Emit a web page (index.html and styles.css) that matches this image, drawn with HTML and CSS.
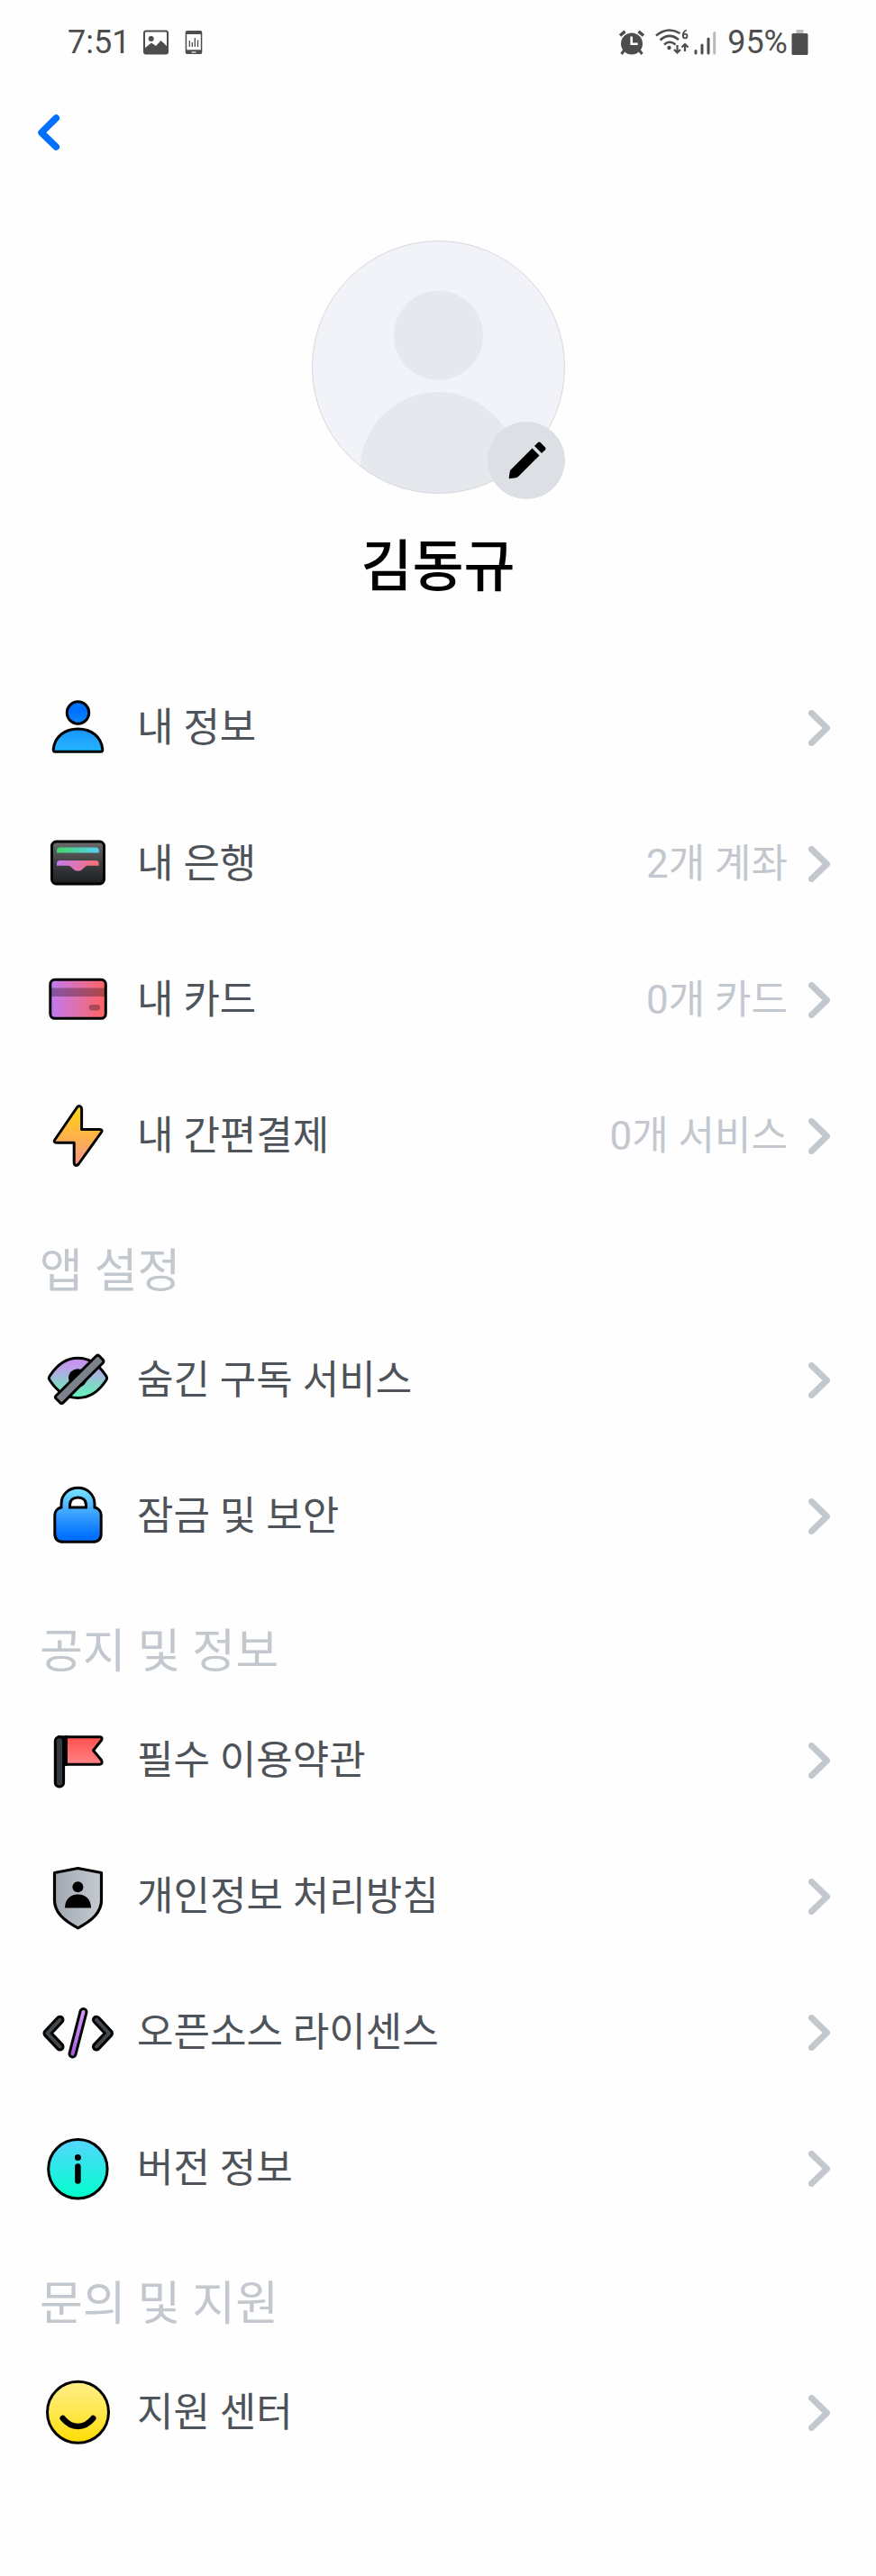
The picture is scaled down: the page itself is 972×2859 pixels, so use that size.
FILE: index.html
```html
<!DOCTYPE html>
<html lang="ko">
<head>
<meta charset="utf-8">
<meta name="viewport" content="width=device-width, initial-scale=1">
<title>내 프로필</title>
<link rel="stylesheet" href="styles.css">
</head>
<body>
<svg class="defs" aria-hidden="true">
  <symbol id="chevron" viewBox="0 0 24 40"><path d="M3.500 3.500 20.500 20 3.500 36.500" fill="none" stroke="currentColor" stroke-width="7" stroke-linecap="round" stroke-linejoin="round"/></symbol>
</svg>

<div class="status">
  <div class="status-group status-left">
    <span>7:51</span>
    <svg class="status-picture" width="28" height="28" viewBox="0 0 28 28" aria-hidden="true">
      <rect x="1" y="1.500" width="26" height="25" rx="2" fill="none" stroke="#4d4d4d" stroke-width="2"/>
      <circle cx="8.700" cy="10" r="3" fill="#4d4d4d"/>
      <path d="M1.500 20.500 9 14.500 14 18 19.500 12 26.500 18.500V26.500H1.500Z" fill="#4d4d4d"/>
    </svg>
    <svg width="20" height="28" viewBox="0 0 20 28" aria-hidden="true">
      <rect x=".7" y="1" width="18.600" height="26" rx="2" fill="#4d4d4d"/>
      <path d="M2.200 5h15.600v17.300H2.200z" fill="#fff"/>
      <path d="M7.500 25h5" stroke="#fff" stroke-width="1.200"/>
      <path d="M5.300 12v7M8.300 14v5M11.300 9v10M14.500 11.500v7.500" stroke="#4d4d4d" stroke-width="1.300" fill="none"/>
    </svg>
  </div>
  <div class="status-group">
    <svg class="status-alarm" width="30" height="28" viewBox="0 0 30 28" aria-hidden="true">
      <circle cx="15" cy="15.500" r="12" fill="#4d4d4d"/>
      <path d="M2 6.500 7.500 1.800M28 6.500 22.500 1.800" stroke="#4d4d4d" stroke-width="3.500"/>
      <path d="M6.500 23 3.500 27M23.500 23l3 4" stroke="#4d4d4d" stroke-width="3"/>
      <path d="M14.700 7.500v8.300h7" fill="none" stroke="#fff" stroke-width="2.600"/>
    </svg>
    <svg class="status-wifi" width="38" height="30" viewBox="0 0 38 30" aria-hidden="true">
      <g fill="none" stroke="#4d4d4d" stroke-width="2.600">
        <path d="M1 7.500Q14-3 27.500 5"/>
        <path d="M5.500 12.500Q15.500 3.500 26 12"/>
        <path d="M10 17.500Q16 12 22.500 17.500"/>
        <path d="M24.500 18v8M21 23l3.500 3.500L28 23M33 25v-8M29.500 20.500 33 17l3.500 3.500" stroke-width="2.200"/>
        <circle cx="33.200" cy="8" r="2.300" stroke-width="1.800"/>
        <path d="M34.800 1.500Q30.500 3 30.800 8" stroke-width="1.800"/>
      </g>
      <circle cx="15.500" cy="21" r="2.200" fill="#4d4d4d"/>
    </svg>
    <svg class="status-signal" width="25" height="28" viewBox="0 0 25 28" aria-hidden="true">
      <g stroke="#4d4d4d" stroke-width="3" stroke-linecap="round">
        <path d="M2 23.500v2.500M9 17v9M16 10v16"/>
        <path d="M22.700 3.500V26" stroke="#b9b9b9"/>
      </g>
    </svg>
    <span>95%</span>
    <svg class="status-battery" width="19" height="28" viewBox="0 0 19 28" aria-hidden="true">
      <path d="M5.500 0h8v5h-8z" fill="#bdbdbd"/>
      <rect x=".5" y="4" width="18" height="24" rx="1.500" fill="#4d4d4d"/>
    </svg>
  </div>
</div>

<header class="nav">
  <button class="back" type="button" aria-label="뒤로">
    <svg width="24" height="40" viewBox="0 0 24 40" aria-hidden="true"><path d="M20.300 4 4 20.200 20.300 36" fill="none" stroke="#0070ff" stroke-width="7.500" stroke-linecap="round" stroke-linejoin="round"/></svg>
  </button>
</header>

<main>
  <section class="profile">
    <div class="avatar">
      <svg width="281" height="281" viewBox="0 0 281 281" aria-hidden="true">
        <defs><clipPath id="disc"><circle cx="140.500" cy="140.500" r="140"/></clipPath></defs>
        <g clip-path="url(#disc)">
          <path d="M0 0h281v281H0z" fill="#f1f3f8"/>
          <circle cx="140.500" cy="105.300" r="49.500" fill="#e5e9ee"/>
          <circle cx="140.500" cy="255" r="87" fill="#e5e9ee"/>
        </g>
        <circle cx="140.500" cy="140.500" r="140" fill="none" stroke="#d6d8db"/>
      </svg>
      <button class="edit" type="button" aria-label="프로필 수정">
        <svg width="86" height="86" viewBox="0 0 86 86" aria-hidden="true">
          <path d="M49.500 29.500 57.500 37.500 34 61Q33 62 31.500 62.200L24.500 63.200Q23.500 63 23.700 62L24.700 55.500Q24.900 54.200 25.800 53.300Z"/>
          <path d="M52 27 56 23Q57.300 21.900 58.600 23L64 28.400Q65.100 29.800 64 31.200L60 35Z"/>
        </svg>
      </button>
    </div>
    <h1 class="name">김동규</h1>
  </section>

  <section class="group">
    <a class="row" href="#info">
      <svg class="icon" viewBox="0 0 80 80" aria-hidden="true">
        <defs><linearGradient id="gUser" gradientUnits="userSpaceOnUse" x1="0" y1="10" x2="0" y2="67"><stop offset=".2" stop-color="#0070ff"/><stop offset=".75" stop-color="#21a5ff"/><stop offset="1" stop-color="#21b4ff"/></linearGradient></defs>
        <g fill="url(#gUser)" stroke="#000" stroke-width="3" stroke-linejoin="round">
          <circle cx="40.500" cy="23" r="12.200"/>
          <path d="M15 66.200Q13 66.200 13.200 63.700C14.500 49.500 26 41 40.500 41S66.500 49.500 67.800 63.700Q68 66.200 66 66.200Z"/>
        </g>
      </svg>
      <span class="label">내 정보</span>
      <svg class="chevron" aria-hidden="true"><use href="#chevron"/></svg>
    </a>
    <a class="row" href="#bank">
      <svg class="icon" viewBox="0 0 80 80" aria-hidden="true">
        <defs>
          <linearGradient id="gWallet" x1="0" y1="0" x2="0" y2="1"><stop stop-color="#6c6c6e"/><stop offset=".5" stop-color="#3d3f41"/><stop offset="1" stop-color="#1b1f22"/></linearGradient>
          <linearGradient id="gGreen"><stop stop-color="#45d465"/><stop offset="1" stop-color="#5ad0f5"/></linearGradient>
          <linearGradient id="gPink"><stop stop-color="#c47af0"/><stop offset="1" stop-color="#fa6f72"/></linearGradient>
        </defs>
        <rect x="11.500" y="15" width="58" height="47" rx="5" fill="url(#gWallet)" stroke="#000" stroke-width="3"/>
        <path d="M17 27.500V25Q17 21.500 20.500 21.500H60.200Q63.700 21.500 63.700 25V27.500Z" fill="url(#gGreen)"/>
        <path d="M17 41.700V39.500Q17 36 20.500 36H60.200Q63.700 36 63.700 39.500V41.700H51C48 41.700 45.500 47.800 40.500 47.800S33 41.700 30 41.700Z" fill="url(#gPink)"/>
      </svg>
      <span class="label">내 은행</span>
      <span class="detail">2개 계좌</span>
      <svg class="chevron" aria-hidden="true"><use href="#chevron"/></svg>
    </a>
    <a class="row" href="#card">
      <svg class="icon" viewBox="0 0 80 80" aria-hidden="true">
        <defs><linearGradient id="gCard"><stop stop-color="#c07af2"/><stop offset="1" stop-color="#ff6560"/></linearGradient></defs>
        <rect x="9.800" y="17.300" width="61.500" height="43" rx="5" fill="url(#gCard)"/>
        <path d="M10 26.500h61V36H10z" opacity=".3"/>
        <rect x="52.700" y="45" width="12.500" height="6.500" rx="3.200" opacity=".3"/>
        <rect x="9.800" y="17.300" width="61.500" height="43" rx="5" fill="none" stroke="#000" stroke-width="3"/>
      </svg>
      <span class="label">내 카드</span>
      <span class="detail">0개 카드</span>
      <svg class="chevron" aria-hidden="true"><use href="#chevron"/></svg>
    </a>
    <a class="row" href="#pay">
      <svg class="icon" viewBox="0 0 80 80" aria-hidden="true">
        <defs><linearGradient id="gBolt" x1="0" y1="0" x2="0" y2="1"><stop stop-color="#ffd60a"/><stop offset=".5" stop-color="#fdb347"/><stop offset="1" stop-color="#f3948f"/></linearGradient></defs>
        <path d="M39.500 8Q41 6 43 6.800Q44.600 7.500 44.600 10V32.500H64Q67.500 32.500 67 34.500Q66.800 35.500 65.500 37L41.500 70.500Q39.500 73 37.800 72.300Q36.200 71.800 36.200 69V47.300H17Q13.500 47.300 14.500 44.500Z" fill="url(#gBolt)" stroke="#000" stroke-width="3" stroke-linejoin="round"/>
      </svg>
      <span class="label">내 간편결제</span>
      <span class="detail">0개 서비스</span>
      <svg class="chevron" aria-hidden="true"><use href="#chevron"/></svg>
    </a>
  </section>

  <section class="group">
    <h2 class="heading">앱 설정</h2>
    <a class="row" href="#hidden">
      <svg class="icon" viewBox="0 0 80 80" aria-hidden="true">
        <defs><linearGradient id="gEye" x1="0" y1="0" x2="0" y2="1"><stop stop-color="#cc8bf0"/><stop offset=".25" stop-color="#bda0e8"/><stop offset=".65" stop-color="#84d4cc"/><stop offset="1" stop-color="#62f5b8"/></linearGradient></defs>
        <path d="M9 35.500C17 23 27 15.300 40.300 15.300S64 23 72 35.500Q73.200 37.500 72 39.500C64 52 53.500 59.500 40.300 59.500S17 52 9 39.500Q7.600 37.500 9 35.500Z" fill="url(#gEye)" stroke="#000" stroke-width="3"/>
        <circle cx="40.300" cy="37.500" r="10.300"/>
        <path d="M61 12.800Q62.500 11.300 64 12.800L68.300 17.300Q69.600 19 68.300 20.500L24 64.800Q22.300 66.300 20.700 64.800L16 60Q14.700 58.500 16.200 57Z" fill="#7c828c" stroke="#000" stroke-width="3"/>
      </svg>
      <span class="label">숨긴 구독 서비스</span>
      <svg class="chevron" aria-hidden="true"><use href="#chevron"/></svg>
    </a>
    <a class="row" href="#lock">
      <svg class="icon" viewBox="0 0 80 80" aria-hidden="true">
        <defs><linearGradient id="gLock" x1="0" y1="0" x2="0" y2="1"><stop stop-color="#7ae6ff"/><stop offset=".4" stop-color="#46abff"/><stop offset=".9" stop-color="#0070ff"/></linearGradient></defs>
        <path d="M22 30V26.500C22 15.500 30.500 8.300 40.500 8.300S59 15.500 59 26.500V30C63.500 31 66.200 34.500 66.200 38.500V59Q66.200 68.300 57 68.300H24Q14.800 68.300 14.800 59V38.500C14.800 34.500 17.500 31 22 30Z" fill="url(#gLock)" stroke="#000" stroke-width="3"/>
        <path d="M31.500 30V27.500C31.500 22 35 19 40.500 19S49.500 22 49.500 27.500V30Z" fill="#fff" stroke="#000" stroke-width="3"/>
      </svg>
      <span class="label">잠금 및 보안</span>
      <svg class="chevron" aria-hidden="true"><use href="#chevron"/></svg>
    </a>
  </section>

  <section class="group">
    <h2 class="heading">공지 및 정보</h2>
    <a class="row" href="#terms">
      <svg class="icon" viewBox="0 0 80 80" aria-hidden="true">
        <defs><linearGradient id="gFlag" x1="0" y1="0" x2="0" y2="1"><stop stop-color="#ff4f4c"/><stop offset="1" stop-color="#ff8585"/></linearGradient></defs>
        <path d="M27 13.700H64.500Q68.500 14 66.500 17.500L57.500 28.700 66.500 39.500Q68.500 43.800 64.500 44.200H27Z" fill="url(#gFlag)" stroke="#000" stroke-width="3" stroke-linejoin="round"/>
        <path d="M18 12.200H29V45.700H20z"/>
        <rect x="15.300" y="13.700" width="9.300" height="55.300" rx="4.600" fill="#343a40" stroke="#000" stroke-width="3"/>
      </svg>
      <span class="label">필수 이용약관</span>
      <svg class="chevron" aria-hidden="true"><use href="#chevron"/></svg>
    </a>
    <a class="row" href="#privacy">
      <svg class="icon" viewBox="0 0 80 80" aria-hidden="true">
        <defs><linearGradient id="gShield"><stop stop-color="#a1a8b1"/><stop offset="1" stop-color="#c6cbd2"/></linearGradient></defs>
        <path d="M40.500 8.500 66.500 13.500V44C66.500 57 57 66 40.500 74.800C24 66 14.500 57 14.500 44V13.500Z" fill="url(#gShield)" stroke="#000" stroke-width="3.200" stroke-linejoin="round"/>
        <circle cx="40.400" cy="29.200" r="6"/>
        <path d="M26 52.500C26 43 32 37.500 40.500 37.500S55 43 55 52.500Z"/>
      </svg>
      <span class="label">개인정보 처리방침</span>
      <svg class="chevron" aria-hidden="true"><use href="#chevron"/></svg>
    </a>
    <a class="row" href="#license">
      <svg class="icon" viewBox="0 0 80 80" aria-hidden="true">
        <defs><linearGradient id="gSlash" gradientUnits="userSpaceOnUse" x1="0" y1="14" x2="0" y2="68"><stop stop-color="#d79af5"/><stop offset="1" stop-color="#a858e0"/></linearGradient></defs>
        <g fill="none" stroke-linecap="round" stroke-linejoin="round">
          <path d="M20.500 25.700 6.500 40.700 20.500 55.500M61 25.700 75 40.700 61 55.500" stroke="#000" stroke-width="10"/>
          <path d="M20.500 25.700 6.500 40.700 20.500 55.500M61 25.700 75 40.700 61 55.500" stroke="#42484e" stroke-width="4"/>
          <path d="M46.500 17 34.500 63.500" stroke="#000" stroke-width="10"/>
          <path d="M46.500 17 34.500 63.500" stroke="url(#gSlash)" stroke-width="4"/>
        </g>
      </svg>
      <span class="label">오픈소스 라이센스</span>
      <svg class="chevron" aria-hidden="true"><use href="#chevron"/></svg>
    </a>
    <a class="row" href="#version">
      <svg class="icon" viewBox="0 0 80 80" aria-hidden="true">
        <defs><linearGradient id="gInfo" x1="0" y1="0" x2="0" y2="1"><stop stop-color="#55d5ff"/><stop offset="1" stop-color="#00ffcb"/></linearGradient></defs>
        <circle cx="40.400" cy="40.200" r="32.700" fill="url(#gInfo)" stroke="#000" stroke-width="3"/>
        <circle cx="40.400" cy="27.400" r="3.500"/>
        <path d="M40.400 37.500V53.500" stroke="#000" stroke-width="6.500" stroke-linecap="round"/>
      </svg>
      <span class="label">버전 정보</span>
      <svg class="chevron" aria-hidden="true"><use href="#chevron"/></svg>
    </a>
  </section>

  <section class="group">
    <h2 class="heading">문의 및 지원</h2>
    <a class="row" href="#support">
      <svg class="icon" viewBox="0 0 80 80" aria-hidden="true">
        <defs><linearGradient id="gSmile" x1="0" y1="0" x2="0" y2="1"><stop stop-color="#ffef87"/><stop offset=".5" stop-color="#fee74f"/><stop offset="1" stop-color="#ffdd00"/></linearGradient></defs>
        <circle cx="40.500" cy="39.300" r="34" fill="url(#gSmile)" stroke="#000" stroke-width="3"/>
        <path d="M23.700 46Q31 55 40.500 55T57.300 46" fill="none" stroke="#000" stroke-width="6.500" stroke-linecap="round"/>
      </svg>
      <span class="label">지원 센터</span>
      <svg class="chevron" aria-hidden="true"><use href="#chevron"/></svg>
    </a>
  </section>
</main>
</body>
</html>
```
FILE: styles.css
```css
* {
  box-sizing: border-box;
}

body {
  margin: 0;
  background: #fefefe;
  color: #4d5359;
  font-family: Roboto, "Noto Sans CJK KR", sans-serif;
  font-size: 44px;
}

svg {
  display: block;
  flex: none;
}

button {
  padding: 0;
  border: 0;
  background: none;
  cursor: pointer;
}

.defs {
  position: absolute;
  width: 0;
  height: 0;
}

.status {
  display: flex;
  justify-content: space-between;
  height: 94px;
  padding: 0 75px;
  color: #4d4d4d;
  font-size: 36px;
  line-height: 40px;
}

.status-group {
  display: flex;
  align-items: center;
}

.status-left {
  gap: 18px;
}

.status-picture {
  margin-left: -3px;
}

.status-alarm {
  margin-right: 11px;
}

.status-wifi {
  margin-right: 5px;
}

.status-signal {
  margin-right: 12px;
}

.status-battery {
  margin-left: 4px;
}

.nav {
  display: flex;
  align-items: center;
  height: 105px;
  padding: 0 42px;
}

.profile {
  display: flex;
  flex-direction: column;
  align-items: center;
  padding: 68px 44px 56px;
}

.avatar {
  position: relative;
}

.edit {
  position: absolute;
  right: 0;
  bottom: -6px;
  border-radius: 50%;
  background: #dcdfe4;
}

.name {
  margin: 36px 0 0;
  color: #000;
  font-size: 62px;
  font-weight: 500;
  line-height: 92px;
}

.heading {
  height: 120px;
  margin: 0;
  padding: 38px 44px 0;
  color: #c3c8ce;
  font-size: 52px;
  font-weight: 400;
  line-height: 76px;
}

.row {
  display: flex;
  align-items: center;
  height: 151px;
  padding: 0 51px 0 46px;
  color: inherit;
  line-height: 66px;
  text-decoration: none;
}

.icon {
  width: 80px;
  height: 80px;
  margin-right: 26px;
}

.label {
  flex: 1;
}

.detail {
  color: #c3c8ce;
}

.chevron {
  width: 24px;
  height: 40px;
  margin-left: 23px;
  color: #c3c8ce;
}
```
